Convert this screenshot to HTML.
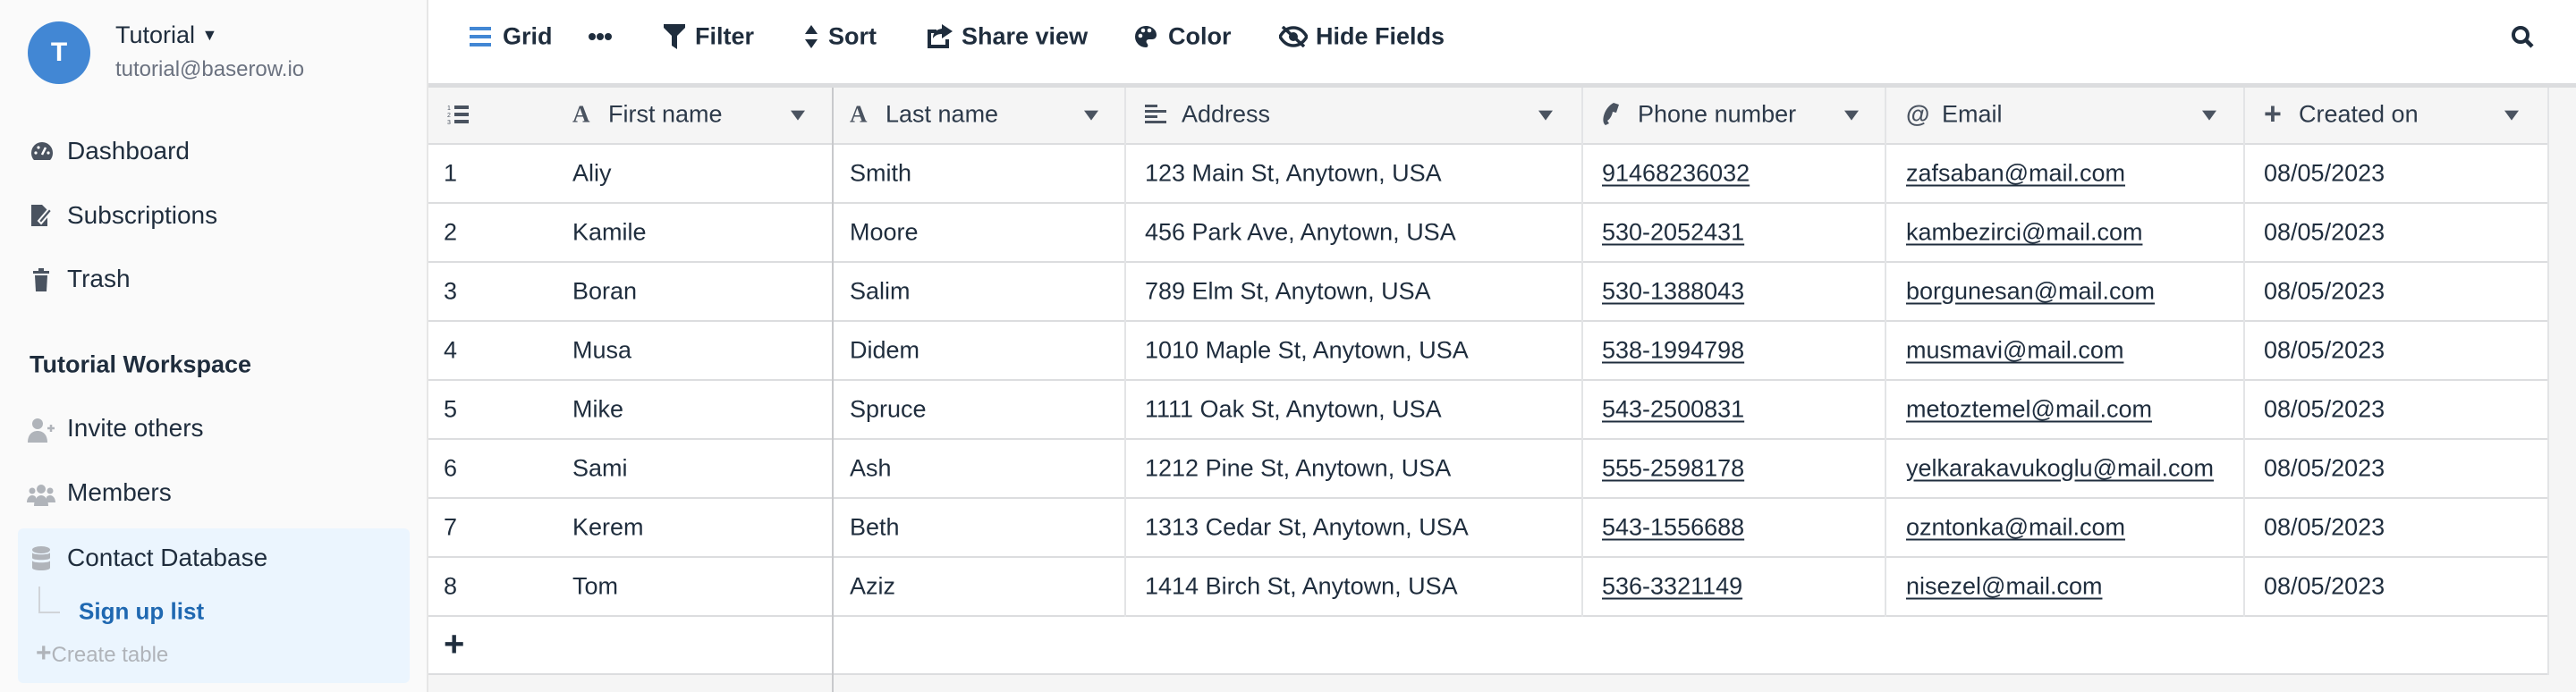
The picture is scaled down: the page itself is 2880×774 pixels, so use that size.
<!DOCTYPE html>
<html><head><meta charset="utf-8"><style>
*{box-sizing:border-box;margin:0;padding:0}
body{width:2880px;height:774px;overflow:hidden;background:#fff;font-family:"Liberation Sans",Arial,sans-serif;color:#1f2d3d;position:relative}
.a{position:absolute;white-space:nowrap}
#side{position:absolute;left:0;top:0;width:479px;height:774px;background:#fafafa;border-right:2px solid #e6e6e6}
.nav{position:absolute;left:75px;font-size:28px;transform:translateY(-50%)}
.ic{position:absolute;transform:translate(-50%,-50%)}
.tb{position:absolute;top:41px;transform:translateY(-50%);font-size:27px;font-weight:bold}
.hl{position:absolute;left:479px;right:0;height:2px;background:#dcdddf}
.vl{position:absolute;width:2px;background:#e3e4e6}
.c{position:absolute;font-size:27px;transform:translateY(-50%)}
.u{text-decoration:underline;text-underline-offset:4px}
.h{position:absolute;top:128px;transform:translateY(-50%);font-size:27px;color:#2d3a4a}
.arr{position:absolute;top:128px;width:0;height:0;border-left:8px solid transparent;border-right:8px solid transparent;border-top:11px solid #4a5360;transform:translateY(-40%)}
</style></head><body>
<div id="side">
 <div class="a" style="left:31px;top:24px;width:70px;height:70px;border-radius:50%;background:#4287d4;color:#fff;font-weight:bold;font-size:30px;text-align:center;line-height:70px">T</div>
 <div class="a" style="left:129px;top:24px;font-size:27px">Tutorial <span style="font-size:18px;position:relative;top:-3px">▼</span></div>
 <div class="a" style="left:129px;top:64px;font-size:24px;color:#6b7280">tutorial@baserow.io</div>
 <svg class="ic" style="left:47px;top:169px" width="26" height="24" viewBox="0 0 26 24"><path d="M13 2a12 12 0 0 0-12 12c0 3 1 6 3 8h18c2-2 3-5 3-8A12 12 0 0 0 13 2z" fill="#4a5360"/><path d="M13 16l4-8" stroke="#fff" stroke-width="2.5"/><circle cx="6" cy="14" r="1.6" fill="#fff"/><circle cx="9" cy="8" r="1.6" fill="#fff"/><circle cx="20" cy="14" r="1.6" fill="#fff"/></svg>
 <div class="nav" style="top:169px">Dashboard</div>
 <svg class="ic" style="left:46px;top:241px" width="26" height="28" viewBox="0 0 26 28"><path d="M2 2h12l6 6v18H2z" fill="#4a5360"/><path d="M10 20l12-14 3 3-12 14z" fill="#4a5360" stroke="#fafafa" stroke-width="2"/></svg>
 <div class="nav" style="top:241px">Subscriptions</div>
 <svg class="ic" style="left:46px;top:313px" width="20" height="26" viewBox="0 0 20 26"><rect x="1" y="3" width="18" height="3" fill="#4a5360"/><rect x="7" y="0" width="6" height="3" fill="#4a5360"/><path d="M3 8h14l-1 18H4z" fill="#4a5360"/></svg>
 <div class="nav" style="top:312px">Trash</div>
 <div class="nav" style="left:33px;top:408px;font-weight:bold;font-size:27px">Tutorial Workspace</div>
 <svg class="ic" style="left:46px;top:481px" width="30" height="28" viewBox="0 0 30 28"><circle cx="11" cy="7" r="6" fill="#b0b4ba"/><path d="M0 28c0-9 5-13 11-13s11 4 11 13z" fill="#b0b4ba"/><path d="M22 12h8M26 8v8" stroke="#b0b4ba" stroke-width="2.5"/></svg>
 <div class="nav" style="top:479px">Invite others</div>
 <svg class="ic" style="left:46px;top:553px" width="32" height="26" viewBox="0 0 32 26"><circle cx="16" cy="7" r="5" fill="#b0b4ba"/><circle cx="6" cy="9" r="3.5" fill="#b0b4ba"/><circle cx="26" cy="9" r="3.5" fill="#b0b4ba"/><path d="M8 26c0-8 4-12 8-12s8 4 8 12z" fill="#b0b4ba"/><path d="M0 22c0-5 3-8 6-8s4 2 4 2v6zM32 22c0-5-3-8-6-8s-4 2-4 2v6z" fill="#b0b4ba"/></svg>
 <div class="nav" style="top:551px">Members</div>
 <div class="a" style="left:20px;top:591px;width:438px;height:173px;background:#ebf5fe;border-radius:6px"></div>
 <svg class="ic" style="left:46px;top:625px" width="20" height="28" viewBox="0 0 20 28"><ellipse cx="10" cy="4" rx="10" ry="4" fill="#b0b4ba"/><path d="M0 7c0 3 20 3 20 0v6c0 3-20 3-20 0zM0 16c0 3 20 3 20 0v8c0 4-20 4-20 0z" fill="#b0b4ba"/></svg>
 <div class="nav" style="top:624px">Contact Database</div>
 <div class="a" style="left:43px;top:656px;width:24px;height:30px;border-left:2px solid #d0d4d9;border-bottom:2px solid #d0d4d9"></div>
 <div class="nav" style="left:88px;top:684px;color:#1f68b1;font-weight:bold;font-size:26px">Sign up list</div>
 <div class="nav" style="left:40px;top:731px;color:#b0b4ba;font-size:24px"><span style="font-weight:bold;font-size:30px">+</span>Create table</div>
</div>

<!-- toolbar -->
<svg class="a" style="left:525px;top:29px" width="24" height="24" viewBox="0 0 24 24"><rect y="1" width="24" height="4" fill="#4287d4"/><rect y="10" width="24" height="4" fill="#4287d4"/><rect y="19" width="24" height="4" fill="#4287d4"/></svg>
<div class="tb" style="left:562px">Grid</div>
<svg class="a" style="left:658px;top:36px" width="26" height="10" viewBox="0 0 26 10"><circle cx="4" cy="5" r="4" fill="#1f2d3d"/><circle cx="13" cy="5" r="4" fill="#1f2d3d"/><circle cx="22" cy="5" r="4" fill="#1f2d3d"/></svg>
<svg class="a" style="left:742px;top:27px" width="24" height="28" viewBox="0 0 24 28"><path d="M0 0h24v4l-9 9v15l-6-4V13L0 4z" fill="#1f2d3d"/></svg>
<div class="tb" style="left:777px">Filter</div>
<svg class="a" style="left:900px;top:28px" width="14" height="26" viewBox="0 0 14 26"><path d="M7 0l7 10H0zM7 26l7-10H0z" fill="#1f2d3d"/></svg>
<div class="tb" style="left:926px">Sort</div>
<svg class="a" style="left:1035px;top:27px" width="30" height="27" viewBox="0 0 30 27"><path d="M2 6h10v4H6v13h16v-6h4v10H2z" fill="#1f2d3d"/><path d="M18 0l12 8-12 8v-5c-5 0-8 2-10 5 0-7 4-10 10-11z" fill="#1f2d3d"/></svg>
<div class="tb" style="left:1075px">Share view</div>
<svg class="a" style="left:1268px;top:28px" width="26" height="26" viewBox="0 0 26 26"><path d="M13 1a12 12 0 0 0 0 24c3 0 3-3 1-5-1-2 0-4 3-4h3c3 0 5-2 5-5C25 5 19 1 13 1z" fill="#1f2d3d"/><circle cx="7" cy="12" r="2.3" fill="#fff"/><circle cx="10" cy="6" r="2.3" fill="#fff"/><circle cx="17" cy="6" r="2.3" fill="#fff"/></svg>
<div class="tb" style="left:1306px">Color</div>
<svg class="a" style="left:1430px;top:29px" width="32" height="24" viewBox="0 0 32 24"><path d="M1 12C5 5 10 2 16 2s11 3 15 10c-4 7-9 10-15 10S5 19 1 12z" fill="none" stroke="#1f2d3d" stroke-width="3.5"/><circle cx="16" cy="12" r="5" fill="#1f2d3d"/><path d="M4 1l24 22" stroke="#1f2d3d" stroke-width="3.5"/></svg>
<div class="tb" style="left:1471px">Hide Fields</div>
<svg class="a" style="left:2807px;top:28px" width="26" height="26" viewBox="0 0 26 26"><circle cx="11" cy="11" r="8" fill="none" stroke="#1f2d3d" stroke-width="4"/><path d="M17 17l7 7" stroke="#1f2d3d" stroke-width="4.5"/></svg>

<!-- grid -->
<div class="a" style="left:479px;top:93px;right:0;height:5px;background:#dcdddf"></div>
<div class="a" style="left:479px;top:98px;width:2370px;height:63px;background:#f5f5f5"></div>
<div class="a" style="left:479px;top:755px;right:0;height:19px;background:#f5f5f5"></div>
<div class="a" style="left:2849px;top:98px;right:0;height:676px;background:#f5f5f5"></div>
<div class="hl" style="top:160px;width:2370px"></div>
<div class="hl" style="top:226px;width:2370px"></div>
<div class="hl" style="top:292px;width:2370px"></div>
<div class="hl" style="top:358px;width:2370px"></div>
<div class="hl" style="top:424px;width:2370px"></div>
<div class="hl" style="top:490px;width:2370px"></div>
<div class="hl" style="top:556px;width:2370px"></div>
<div class="hl" style="top:622px;width:2370px"></div>
<div class="hl" style="top:688px;width:2370px"></div>
<div class="hl" style="top:753px;width:2370px"></div>
<div class="vl" style="left:930px;top:98px;height:676px;background:#c8c9cc"></div>
<div class="vl" style="left:1257px;top:98px;height:592px"></div>
<div class="vl" style="left:1768px;top:98px;height:592px"></div>
<div class="vl" style="left:2107px;top:98px;height:592px"></div>
<div class="vl" style="left:2508px;top:98px;height:592px"></div>
<div class="vl" style="left:2848px;top:98px;height:657px"></div>

<!-- header -->
<svg class="a" style="left:500px;top:116px" width="24" height="24" viewBox="0 0 24 24"><g fill="#4a5360"><rect x="8" y="2" width="16" height="4"/><rect x="8" y="10" width="16" height="4"/><rect x="8" y="18" width="16" height="4"/><text x="0" y="7" font-size="7" font-family="Liberation Sans">1</text><text x="0" y="15" font-size="7" font-family="Liberation Sans">2</text><text x="0" y="23" font-size="7" font-family="Liberation Sans">3</text></g></svg>
<div class="h" style="left:640px;font-weight:bold;font-family:'Liberation Serif',serif;color:#4a5360">A</div><div class="h" style="left:680px">First name</div><div class="arr" style="left:884px"></div>
<div class="h" style="left:950px;font-weight:bold;font-family:'Liberation Serif',serif;color:#4a5360">A</div><div class="h" style="left:990px">Last name</div><div class="arr" style="left:1212px"></div>
<svg class="a" style="left:1280px;top:117px" width="24" height="22" viewBox="0 0 24 22"><g fill="#4a5360"><rect width="14" height="3"/><rect y="6" width="24" height="3"/><rect y="12" width="14" height="3"/><rect y="18" width="24" height="3"/></g></svg>
<div class="h" style="left:1321px">Address</div><div class="arr" style="left:1720px"></div>
<svg class="a" style="left:1790px;top:115px" width="22" height="26" viewBox="0 0 22 26"><path d="M14 0l6 2-3 9-4-1c-1 5-3 8-6 10l2 3-4 2C-1 21 4 5 14 0z" fill="#4a5360"/></svg>
<div class="h" style="left:1831px">Phone number</div><div class="arr" style="left:2062px"></div>
<div class="h" style="left:2131px;font-weight:bold;color:#4a5360">@</div><div class="h" style="left:2171px">Email</div><div class="arr" style="left:2462px"></div>
<div class="h" style="left:2531px;font-weight:bold;color:#4a5360;font-size:34px">+</div><div class="h" style="left:2570px">Created on</div><div class="arr" style="left:2800px"></div>

<!-- rows -->
<div class="c" style="left:496px;top:194px">1</div><div class="c" style="left:640px;top:194px">Aliy</div><div class="c" style="left:950px;top:194px">Smith</div><div class="c" style="left:1280px;top:194px">123 Main St, Anytown, USA</div><div class="c u" style="left:1791px;top:194px">91468236032</div><div class="c u" style="left:2131px;top:194px">zafsaban@mail.com</div><div class="c" style="left:2531px;top:194px">08/05/2023</div>
<div class="c" style="left:496px;top:260px">2</div><div class="c" style="left:640px;top:260px">Kamile</div><div class="c" style="left:950px;top:260px">Moore</div><div class="c" style="left:1280px;top:260px">456 Park Ave, Anytown, USA</div><div class="c u" style="left:1791px;top:260px">530-2052431</div><div class="c u" style="left:2131px;top:260px">kambezirci@mail.com</div><div class="c" style="left:2531px;top:260px">08/05/2023</div>
<div class="c" style="left:496px;top:326px">3</div><div class="c" style="left:640px;top:326px">Boran</div><div class="c" style="left:950px;top:326px">Salim</div><div class="c" style="left:1280px;top:326px">789 Elm St, Anytown, USA</div><div class="c u" style="left:1791px;top:326px">530-1388043</div><div class="c u" style="left:2131px;top:326px">borgunesan@mail.com</div><div class="c" style="left:2531px;top:326px">08/05/2023</div>
<div class="c" style="left:496px;top:392px">4</div><div class="c" style="left:640px;top:392px">Musa</div><div class="c" style="left:950px;top:392px">Didem</div><div class="c" style="left:1280px;top:392px">1010 Maple St, Anytown, USA</div><div class="c u" style="left:1791px;top:392px">538-1994798</div><div class="c u" style="left:2131px;top:392px">musmavi@mail.com</div><div class="c" style="left:2531px;top:392px">08/05/2023</div>
<div class="c" style="left:496px;top:458px">5</div><div class="c" style="left:640px;top:458px">Mike</div><div class="c" style="left:950px;top:458px">Spruce</div><div class="c" style="left:1280px;top:458px">1111 Oak St, Anytown, USA</div><div class="c u" style="left:1791px;top:458px">543-2500831</div><div class="c u" style="left:2131px;top:458px">metoztemel@mail.com</div><div class="c" style="left:2531px;top:458px">08/05/2023</div>
<div class="c" style="left:496px;top:524px">6</div><div class="c" style="left:640px;top:524px">Sami</div><div class="c" style="left:950px;top:524px">Ash</div><div class="c" style="left:1280px;top:524px">1212 Pine St, Anytown, USA</div><div class="c u" style="left:1791px;top:524px">555-2598178</div><div class="c u" style="left:2131px;top:524px">yelkarakavukoglu@mail.com</div><div class="c" style="left:2531px;top:524px">08/05/2023</div>
<div class="c" style="left:496px;top:590px">7</div><div class="c" style="left:640px;top:590px">Kerem</div><div class="c" style="left:950px;top:590px">Beth</div><div class="c" style="left:1280px;top:590px">1313 Cedar St, Anytown, USA</div><div class="c u" style="left:1791px;top:590px">543-1556688</div><div class="c u" style="left:2131px;top:590px">ozntonka@mail.com</div><div class="c" style="left:2531px;top:590px">08/05/2023</div>
<div class="c" style="left:496px;top:656px">8</div><div class="c" style="left:640px;top:656px">Tom</div><div class="c" style="left:950px;top:656px">Aziz</div><div class="c" style="left:1280px;top:656px">1414 Birch St, Anytown, USA</div><div class="c u" style="left:1791px;top:656px">536-3321149</div><div class="c u" style="left:2131px;top:656px">nisezel@mail.com</div><div class="c" style="left:2531px;top:656px">08/05/2023</div>
<div class="c" style="left:496px;top:721px;font-size:40px;font-weight:bold">+</div>
</body></html>
